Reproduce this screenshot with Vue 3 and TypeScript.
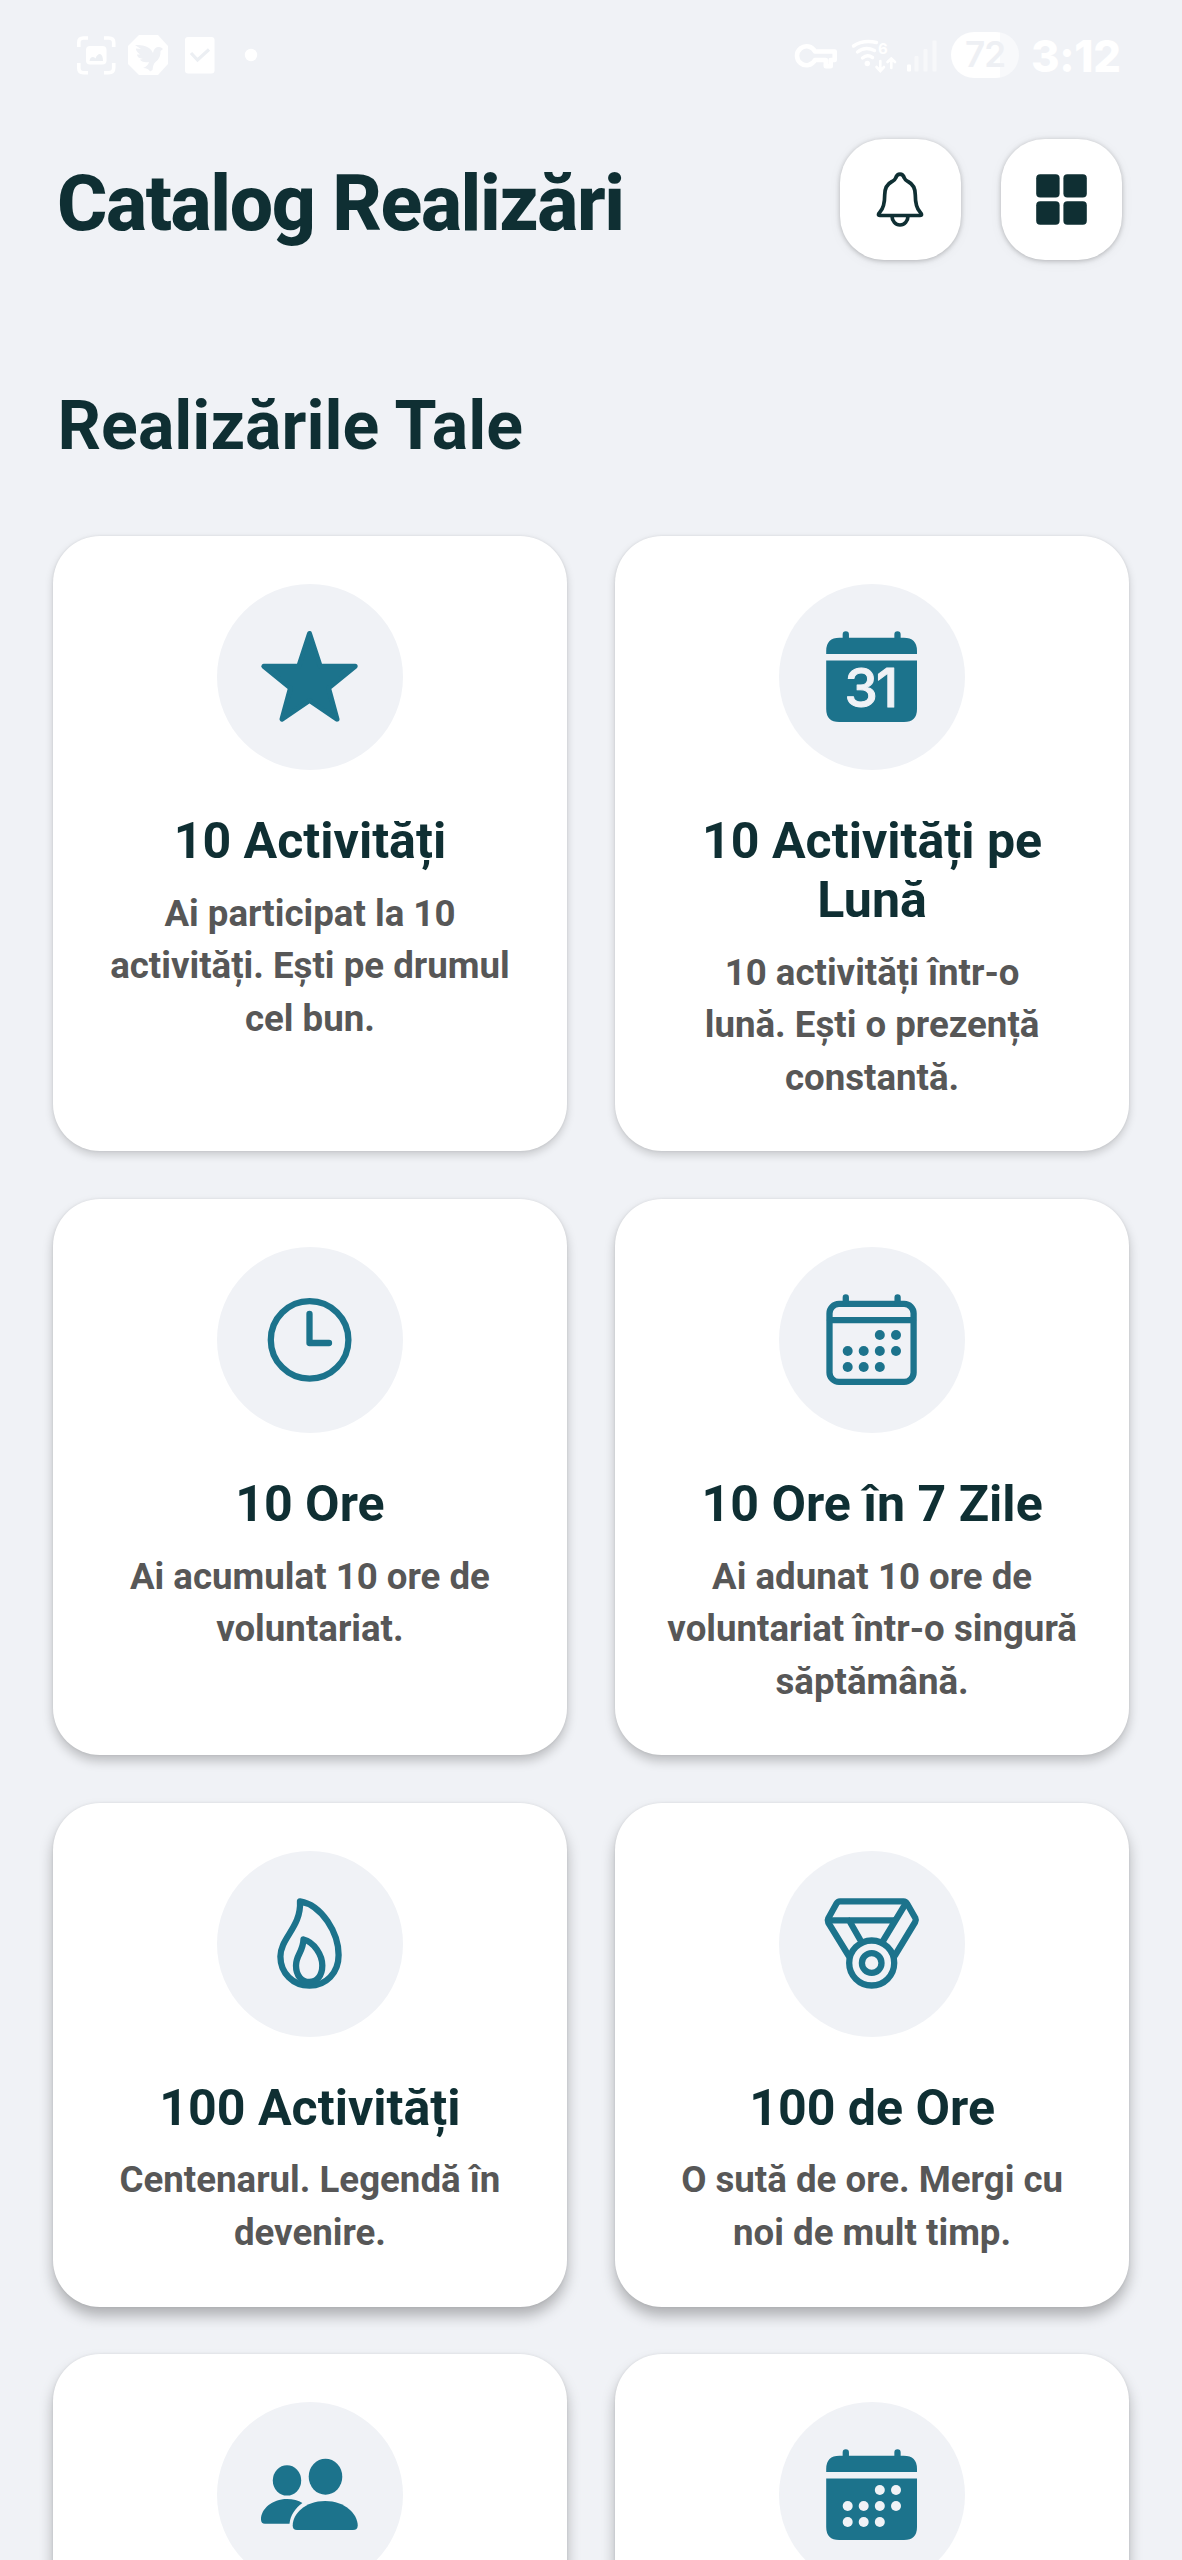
<script setup lang="ts">
type IconName = 'star' | 'calendar31' | 'clock' | 'calendar' | 'flame' | 'medal' | 'people' | 'calendarFill'

interface Achievement {
  icon: IconName
  title: string
  text: string
}

const rows: Achievement[][] = [
  [
    { icon: 'star', title: '10 Activități', text: 'Ai participat la 10\nactivități. Ești pe drumul\ncel bun.' },
    { icon: 'calendar31', title: '10 Activități pe\nLună', text: '10 activități într-o\nlună. Ești o prezență\nconstantă.' },
  ],
  [
    { icon: 'clock', title: '10 Ore', text: 'Ai acumulat 10 ore de\nvoluntariat.' },
    { icon: 'calendar', title: '10 Ore în 7 Zile', text: 'Ai adunat 10 ore de\nvoluntariat într-o singură\nsăptămână.' },
  ],
  [
    { icon: 'flame', title: '100 Activități', text: 'Centenarul. Legendă în\ndevenire.' },
    { icon: 'medal', title: '100 de Ore', text: 'O sută de ore. Mergi cu\nnoi de mult timp.' },
  ],
  [
    { icon: 'people', title: '', text: '' },
    { icon: 'calendarFill', title: '', text: '' },
  ],
]

const dots: [number, number][] = [
  [100.8, 88], [117, 88],
  [68.7, 104], [84.7, 104], [100.8, 104], [117, 104],
  [68.7, 120], [84.7, 120], [100.8, 120],
]
</script>

<template>
  <div class="screen">
    <div class="status">
      <svg class="status-left" width="240" height="112" viewBox="0 0 240 112">
        <g fill="none" stroke="#fff" stroke-width="3.6" stroke-linecap="butt" stroke-linejoin="round">
          <path d="M38.8 47V42.500Q38.800 38 43.300 38H48M64 38H68.700Q73.700 38 73.700 42.500V47M73.700 63V68Q73.700 72.700 68.700 72.700H64M48 72.700H43.300Q38.800 72.700 38.800 68V63" />
        </g>
        <rect x="46" y="46" width="20.500" height="18.500" rx="4" fill="#fff" />
        <path d="M49.500 61Q50 57 53 57Q54.500 57 55.500 58.500Q57 54 60 54Q63 55 63 61Z" fill="#eceff3" />
        <path d="M99 35H118L128 46V64L118 75H99L88 64V46Z" fill="#fff" />
        <path d="M95 45Q104 44.500 109 48Q112 50 113 53Q114 47.500 118 47Q121 46.500 123 49L120.500 51Q121 58 115.500 62Q113 64 112.500 70L110 71.500Q108.500 68 103 68Q108 66 109 62Q102 63 100 59.500L103 59Q97 58 97 54.500L100 54.500Q95.500 51 96 48.500L101 49Z" fill="#eff1f5" />
        <rect x="145" y="37" width="29.500" height="36.500" rx="3" fill="#fff" />
        <path d="M151 53L157.500 60L169 49.500" fill="none" stroke="#eceff3" stroke-width="3.200" />
        <circle cx="211" cy="55" r="6.200" fill="#fff" />
      </svg>
      <div class="status-right">
        <svg width="157" height="112" viewBox="0 0 157 112">
          <path fill="none" stroke="#fff" stroke-width="4.600" stroke-linejoin="round" d="M21 51.500A9.500 9.500 0 1 0 21 60H31.800V66.200H36.700V60H40.700V51.500Z" />
          <g fill="#fff">
            <circle cx="73.300" cy="63.500" r="2.700" />
            <rect x="113" y="64.500" width="4" height="7" rx="1" />
          </g>
          <g fill="none" stroke="#fff" stroke-width="3.400" stroke-linecap="round">
            <path d="M59.500 46Q69 39.500 82.500 42.500M63.500 52Q71 46 80.500 50.500M68.500 58Q73.300 54 78.500 57.500" />
            <path d="M86.300 61V70M82.500 67L86.300 71L90 67M97.300 68V59M93.500 62L97.300 58.500L101 62" stroke-width="2.600" />
          </g>
          <text x="84" y="54" class="six">6</text>
          <g fill="#f7f8fa">
            <rect x="120.500" y="56" width="4" height="15.500" rx="1" />
            <rect x="129.500" y="49" width="4" height="22.500" rx="1" />
            <rect x="138.500" y="40.500" width="4" height="31" rx="1" />
          </g>
        </svg>
        <span class="battery">72</span>
        <span class="time">3:12</span>
      </div>
    </div>

    <header class="header">
      <h1>Catalog Realizări</h1>
      <div class="actions">
        <button class="action" aria-label="Notificări">
          <svg width="121" height="121" viewBox="0 0 121 121" fill="none" stroke="#0f2f33" stroke-width="3.700" stroke-linejoin="round">
            <path d="M60 35.200C57.300 35.200 56.300 37 55.500 39.300C54.900 41.200 53.600 41.700 52 42.500C47 45 44.700 50 44.700 56C44.700 65 43.200 69.500 40 73C38 75.200 38 76.500 40 76.500H80C82 76.500 82 75.200 80 73C76.800 69.500 75.300 65 75.300 56C75.300 50 73 45 68 42.500C66.400 41.700 65.100 41.200 64.500 39.300C63.700 37 62.700 35.200 60 35.200Z" />
            <path d="M52 77C52 82 55.500 86 60 86C64.500 86 68 82 68 77" />
          </svg>
        </button>
        <button class="action" aria-label="Meniu">
          <svg width="121" height="121" viewBox="0 0 121 121" fill="#0f2f33">
            <rect x="35.200" y="35.200" width="23.400" height="23.400" rx="4" />
            <rect x="62.400" y="35.200" width="23.400" height="23.400" rx="4" />
            <rect x="35.200" y="62.300" width="23.400" height="23.400" rx="4" />
            <rect x="62.400" y="62.300" width="23.400" height="23.400" rx="4" />
          </svg>
        </button>
      </div>
    </header>

    <h2>Realizările Tale</h2>

    <main class="grid">
      <div v-for="(row, r) in rows" :key="r" class="row" :class="`row-${r + 1}`">
        <article v-for="item in row" :key="item.icon" class="card">
          <div class="badge">
            <svg width="186" height="186" viewBox="0 0 186 186">
              <path v-if="item.icon === 'star'" class="solid round" d="M92.500 49.500L103.200 82.300H138.200L111.500 104L120 135.200L92.500 116.500L65 135.200L73.500 104L46.800 82.300H81.800Z" />

              <g v-else-if="item.icon === 'calendar31' || item.icon === 'calendarFill'">
                <path class="line" d="M66.800 50.500V58M118.500 50.500V58" />
                <path class="solid" d="M47.200 70V67Q47.200 53.800 60.500 53.800H124.700Q138 53.800 138 67V70ZM47.200 76.500H138V125Q138 138 125 138H60.200Q47.200 138 47.200 125Z" />
                <text v-if="item.icon === 'calendar31'" x="91.500" y="122.700" class="day">31</text>
                <template v-else>
                  <circle v-for="(d, i) in dots" :key="i" :cx="d[0]" :cy="d[1]" r="5" fill="#f0f2f6" />
                </template>
              </g>

              <g v-else-if="item.icon === 'clock'" class="line">
                <circle cx="92.600" cy="92.900" r="38.800" />
                <path d="M92.500 67V96H112" />
              </g>

              <g v-else-if="item.icon === 'calendar'">
                <g class="line">
                  <rect x="50.500" y="56.900" width="84.100" height="78" rx="9.500" />
                  <path d="M51 73.200H134M66.800 50.500V56M118.600 50.500V56" />
                </g>
                <circle v-for="(d, i) in dots" :key="i" class="solid" :cx="d[0]" :cy="d[1]" r="5" />
              </g>

              <g v-else-if="item.icon === 'flame'" class="line">
                <path d="M83 50.300C105 54 121.600 82 121.600 104C121.600 122 109 134.700 92.500 134.700C76 134.700 63.400 122 63.400 105.500C63.400 87 84.500 76 83 50.300Z" />
                <path d="M86.500 88.500C97 91 105.300 104 105.300 114.500C105.300 124.500 100 131 92.300 131C84.500 131 79 124.500 79 114.500C79 104 86 101 86.500 88.500Z" />
              </g>

              <g v-else-if="item.icon === 'medal'" class="line">
                <circle cx="92.700" cy="112" r="22.500" />
                <circle cx="92.700" cy="112" r="9.800" />
                <path d="M69.500 104.500L49.200 71.500Q48.200 69.500 49.200 67.500L57.500 52.500Q58.700 50.300 61 50.300H124.500Q126.800 50.300 128 52.500L136.300 67Q137.300 69 136.200 71L115.900 104.500" />
                <path d="M49.500 69.300H114.500M127 52L104.300 89.500M70 69.300L81 88.500" />
              </g>

              <g v-else class="solid">
                <ellipse cx="70" cy="78.400" rx="14.200" ry="15.200" />
                <ellipse cx="108.500" cy="74.700" rx="16.800" ry="18" />
                <path d="M80 128Q75.700 128 75.700 123.500C75.700 112 88 99 108.200 99C128 99 140.700 112 140.700 123.500Q140.700 128 136 128Z" />
                <path d="M48 121.700Q44 121.700 44 117.500C44 107 55 97 70 97C76 97 81.500 98.600 85.400 101C78 106.500 73.500 113 72.500 121.700Z" />
              </g>
            </svg>
          </div>
          <h3>{{ item.title }}</h3>
          <p>{{ item.text }}</p>
        </article>
      </div>
    </main>
  </div>
</template>

<style>
html,
body {
  margin: 0;
  background: #f0f2f6;
}
</style>

<style scoped>
.screen {
  width: 1182px;
  height: 2560px;
  overflow: hidden;
  background: #f0f2f6;
  color: #0f2f33;
  font-family: Roboto, 'Liberation Sans', sans-serif;
  display: flex;
  flex-direction: column;
}

.status {
  flex: none;
  height: 112px;
  display: flex;
  justify-content: space-between;
  padding: 0 61px 0 40px;
}

.status-right {
  display: flex;
  align-items: center;
  height: 112px;
  color: #fff;
  font-family: Inter, sans-serif;
}

.six {
  font: 700 15px Inter, sans-serif;
  fill: #fff;
}

.battery {
  width: 68px;
  height: 46px;
  line-height: 45px;
  margin-top: -2px;
  border-radius: 23px;
  text-align: center;
  font-size: 35px;
  font-weight: 600;
  letter-spacing: -1px;
  color: #eef0f4;
  background: linear-gradient(90deg, #fff 49px, #f8f9fb 49px);
}

.time {
  margin-left: 12px;
  width: 90px;
  font-size: 43.500px;
  font-weight: 800;
  letter-spacing: -0.300px;
  line-height: 52px;
}

.header {
  flex: none;
  margin-top: 27px;
  height: 121px;
  padding: 0 60px 0 57px;
  display: flex;
  align-items: center;
  justify-content: space-between;
}

h1 {
  margin: 8px 0 0;
  font-size: 77px;
  line-height: 90px;
  font-weight: 800;
  letter-spacing: -1.400px;
}

.actions {
  display: flex;
  gap: 40px;
}

.action {
  width: 121px;
  height: 121px;
  padding: 0;
  border: 0;
  border-radius: 44px;
  background: #fff;
  box-shadow: 0 1px 5px rgba(0, 0, 0, 0.24), 0 2px 14px rgba(0, 0, 0, 0.05);
}

.action svg {
  display: block;
}

h2 {
  flex: none;
  margin: 126px 0 0 57.500px;
  font-size: 68px;
  line-height: 80px;
  font-weight: 700;
  letter-spacing: 0.050px;
}

.grid {
  flex: none;
  margin: 69.800px 52.500px 0;
  display: flex;
  flex-direction: column;
  gap: 47.200px;
}

.row {
  display: grid;
  grid-template-columns: 514.800px 514.800px;
  gap: 47.400px;
  --depth: 0 4px 9px rgba(0, 0, 0, 0.17);
}

.row-2 {
  --depth: 0 6px 11px rgba(0, 0, 0, 0.22);
}

.row-3,
.row-4 {
  --depth: 0 9px 14px rgba(0, 0, 0, 0.27);
}

.card {
  box-sizing: border-box;
  padding: 48.300px 0 46.700px;
  border-radius: 47px;
  background: #fff;
  box-shadow: var(--depth), 0 0 3px rgba(0, 0, 0, 0.08);
  text-align: center;
}

.row-4 .card {
  height: 600px;
}

.badge {
  width: 186px;
  height: 186px;
  margin: 0 auto;
  border-radius: 50%;
  background: #f0f2f6;
}

.badge svg {
  display: block;
}

.solid {
  fill: #1c738c;
}

.round {
  stroke: #1c738c;
  stroke-width: 5px;
  stroke-linejoin: round;
}

.line {
  fill: none;
  stroke: #1c738c;
  stroke-width: 6.300px;
  stroke-linecap: round;
  stroke-linejoin: round;
}

.day {
  font: 500 53px Inter, sans-serif;
  letter-spacing: -1.500px;
  text-anchor: middle;
  fill: #f0f2f6;
  stroke: #f0f2f6;
  stroke-width: 1px;
  stroke-linejoin: round;
}

h3 {
  margin: 42.300px 0 0;
  font-size: 50.100px;
  line-height: 59px;
  font-weight: 700;
  white-space: pre-line;
}

p {
  margin: 16.300px 0 0;
  color: #575757;
  font-size: 36.650px;
  line-height: 52.700px;
  font-weight: 700;
  white-space: pre-line;
}
</style>
